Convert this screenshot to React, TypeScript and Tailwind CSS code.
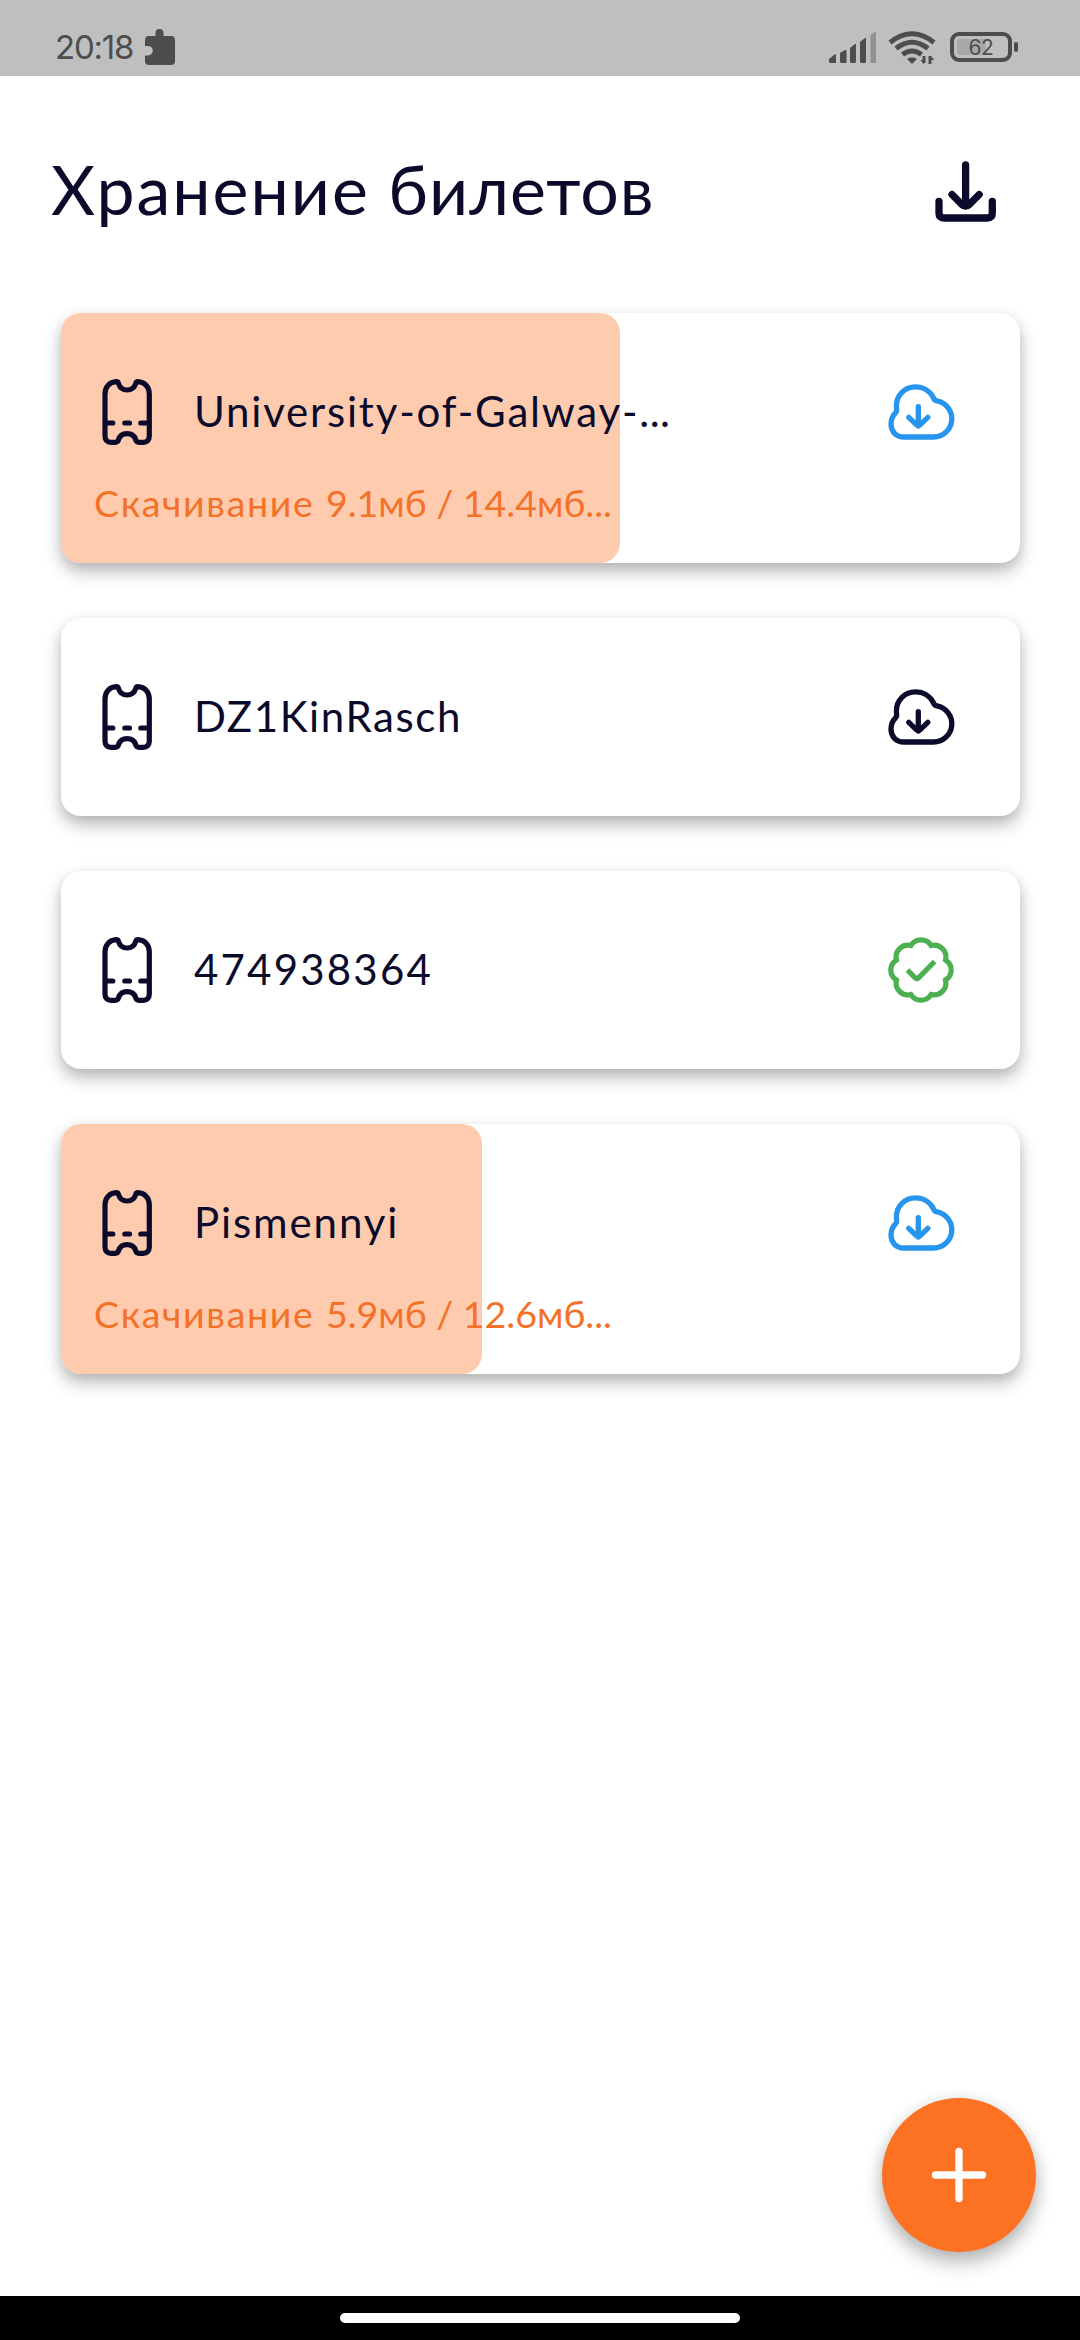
import React from "react";

const INK = "#0b0a2b";

function TicketIcon() {
  return (
    <svg className="h-[76px] w-[60px] shrink-0" viewBox="0 0 60 76" fill="none" stroke={INK} strokeWidth="5.2" strokeLinecap="round" strokeLinejoin="round">
      <path d="M8 20C8 12.8 12.6 8 19.3 7.7c1.1 0 1.8.6 2.1 1.5C22.6 13.2 25.7 16 30.1 16s7.5-2.8 8.7-6.8c.3-.9 1-1.5 2.1-1.5C47.6 8 52.3 12.8 52.3 20V62c0 4-2.3 6.3-6 6.3h-4.4c-1.9 0-2.7-.9-3.2-2.5C37.6 62 34.5 59.6 30.1 59.6s-7.5 2.4-8.6 6.2c-.5 1.6-1.3 2.5-3.2 2.5H14c-3.7 0-6-2.3-6-6.3Z" />
      <path d="M8.500 49h7.300M27.800 49h4.700M43.800 49h8" />
    </svg>
  );
}

function CloudIcon({ color }: { color: string }) {
  return (
    <svg className="h-20 w-20 shrink-0" viewBox="0 0 80 80" fill="none" stroke={color} strokeWidth="5.3" strokeLinecap="round" strokeLinejoin="round">
      <path d="M23 65H52.500A18.200 18.200 0 0 0 55.900 28.900c-1.600-.3-2.500-1-3.100-2.500C49.500 19.300 42.500 14.900 34.300 14.900C24 14.900 15.400 23 15.400 34c0 1.200.1 2.200.3 3.200c.3 1.500-.1 2.500-1.200 3.600C11.500 43.800 10 47.500 10 52C10 59.500 15 65 23 65Z" />
      <path d="M37.300 34.700V54M27.800 45.400l7.500 7.200q2 1.900 4 0l7.500-7.200" />
    </svg>
  );
}

function VerifiedIcon() {
  return (
    <svg className="h-20 w-20 shrink-0" viewBox="0 0 80 80" fill="none" stroke="#4caf50" strokeWidth="5.2">
      <path d="M29.900 15.500a11.800 11.800 0 0 1 20.200 0a11.800 11.800 0 0 1 14.400 14.400a11.800 11.800 0 0 1 0 20.200a11.800 11.800 0 0 1-14.400 14.400a11.800 11.800 0 0 1-20.200 0a11.800 11.800 0 0 1-14.400-14.400a11.800 11.800 0 0 1 0-20.200a11.800 11.800 0 0 1 14.400-14.400Z" />
      <path d="M26.500 40.200l7.700 7.600q1.700 1.600 3.400 0L53.600 31.500" />
    </svg>
  );
}

type Ticket = {
  name: string;
  truncated?: boolean;
  state: "loading" | "idle" | "done";
  progress?: number;
  status?: string;
  spacing: string;
};

const tickets: Ticket[] = [
  { name: "University-of-Galway-", truncated: true, state: "loading", progress: 559, status: "9.1мб / 14.4мб...", spacing: "tracking-[1.8px]" },
  { name: "DZ1KinRasch", state: "idle", spacing: "tracking-[1.6px]" },
  { name: "474938364", state: "done", spacing: "tracking-[2.2px]" },
  { name: "Pismennyi", state: "loading", progress: 421, status: "5.9мб / 12.6мб...", spacing: "tracking-[1.9px]" },
];

function TicketCard({ ticket }: { ticket: Ticket }) {
  const height = ticket.status ? "h-[250px]" : "h-[198px]";
  return (
    <article className={`relative isolate rounded-[20px] bg-white shadow-[0_9px_17px_rgba(0,0,0,0.25),0_3px_12px_rgba(0,0,0,0.08)] ${height}`}>
      {ticket.progress && (
        <div className="absolute inset-y-0 left-0 -z-10 rounded-[20px] bg-[#ffcbaf]" style={{ width: ticket.progress }} />
      )}
      <div className="flex h-[198px] items-center pl-9 pr-[59px]">
        <TicketIcon />
        <span className={`-mt-[3px] ml-[37px] flex-1 whitespace-nowrap text-[42px] leading-[52px] text-[#0b0a2b] ${ticket.spacing}`}>
          {ticket.name}
          {ticket.truncated && <span className="tracking-[0.4px]">...</span>}
        </span>
        {ticket.state === "done" ? <VerifiedIcon /> : <CloudIcon color={ticket.state === "loading" ? "#2795ee" : INK} />}
      </div>
      {ticket.status && (
        <p className="-mt-8 ml-[33px] whitespace-nowrap text-[37.5px] leading-[48px] text-[#f47228]">
          <span className="tracking-[1.7px]">Скачивание </span>
          {ticket.status}
        </p>
      )}
    </article>
  );
}

function StatusBar() {
  return (
    <header className="flex h-[76px] bg-[#bfbfbf] pl-[55px] pr-[62px] text-[#4d4d4d]">
      <span className="mt-[27px] w-[80px] whitespace-nowrap font-['Inter'] text-[33px] font-normal leading-10 tracking-[-1.2px]">20:18</span>
      <svg className="ml-[9px] mt-7 h-[38px] w-8" viewBox="0 0 32 38" fill="currentColor">
        <path d="M4 8h7.500V5a4 4 0 0 1 8 0v3H27q4 0 4 4v21q0 4-4 4H5q-4 0-4-4v-5.500h3a4.800 4.800 0 0 0 0-9.600H1V12q0-4 4-4Z" />
      </svg>
      <svg className="ml-auto mt-[28px] h-10 w-[50px]" viewBox="0 0 50 40" fill="currentColor">
        <path d="M1 31l5.500-4.500H8V35H2.500Q1 35 1 33.500ZM12 25l5-3h1.500v13H13.500Q12 35 12 33.500ZM22 20l5-4h1v17.500Q28 35 26.500 35h-3Q22 35 22 33.500ZM32 14l5-4h1v23.500Q38 35 36.500 35h-3Q32 35 32 33.500Z" />
        <path d="M42.500 7l4-3H48v29.500Q48 35 46.500 35H44q-1.500 0-1.500-1.500Z" opacity=".4" />
      </svg>
      <svg className="ml-[10px] mt-7 h-10 w-12" viewBox="0 0 48 40" fill="none" stroke="currentColor" strokeWidth="5">
        <path d="M2 14.500Q24 -3 46 14.500M8 20.500Q24 8 40 20.500M14.500 26.500Q24 19.500 33.500 26.500" />
        <path d="M19 31q5-3.500 10 0l-5 5Z" fill="currentColor" stroke="none" />
        <path d="M36 28v7M42 28v8" strokeWidth="3" />
        <path d="M32.500 32l3.500 4.500V32ZM42 27.500L46.500 32H42Z" fill="currentColor" stroke="none" />
      </svg>
      <div className="relative ml-[14px] mt-8 flex h-[30px] w-[62px] items-center justify-center rounded-[9px] border-4 border-[#4d4d4d]">
        <div className="absolute left-[3px] top-[3px] h-4 w-[29px] rounded-[3px] bg-[#a9a9a9]" />
        <span className="relative font-['Inter'] text-[21px] font-normal leading-none tracking-[-0.5px]">62</span>
      </div>
      <div className="ml-[2px] mt-[42px] h-[10px] w-1 rounded-[2px] bg-[#4d4d4d]" />
    </header>
  );
}

export default function App() {
  return (
    <div className="flex h-[2340px] w-[1080px] flex-col overflow-hidden bg-white font-['Lato',sans-serif]">
      <StatusBar />
      <div className="mt-[75px] flex h-20 items-center justify-between pl-[51px] pr-[75px]">
        <h1 className="-mt-[5px] whitespace-nowrap text-[68px] leading-[80px] tracking-[1px] text-[#0b0a2b]">
          <span className="tracking-[2px]">Хранение</span> билетов
        </h1>
        <svg className="h-20 w-20" viewBox="0 0 80 80" fill="none" stroke={INK} strokeWidth="7.300" strokeLinecap="round" strokeLinejoin="round">
          <path d="M14 50.500V62q0 5 5 5h43.300q5 0 5-5V50.500M40.600 14v41M27 43.500l9.600 9.700q4 3.600 8 0l9.600-9.700" />
        </svg>
      </div>
      <main className="mt-[82px] flex flex-col gap-[55px] pl-[61px] pr-[60px]">
        {tickets.map((t) => (
          <TicketCard key={t.name} ticket={t} />
        ))}
      </main>
      <button aria-label="Добавить" className="mb-11 ml-auto mr-11 mt-auto flex size-[154px] items-center justify-center rounded-full bg-[#fd7222] shadow-[0_12px_20px_rgba(0,0,0,0.22),0_3px_16px_rgba(0,0,0,0.14)]">
        <svg className="size-[60px]" viewBox="0 0 60 60" stroke="#fff" strokeWidth="7.300" strokeLinecap="round">
          <path d="M30 6.500v47M6.500 30h47" />
        </svg>
      </button>
      <nav className="flex h-11 shrink-0 items-center justify-center bg-black">
        <div className="h-[10px] w-[400px] rounded-full bg-white" />
      </nav>
    </div>
  );
}
